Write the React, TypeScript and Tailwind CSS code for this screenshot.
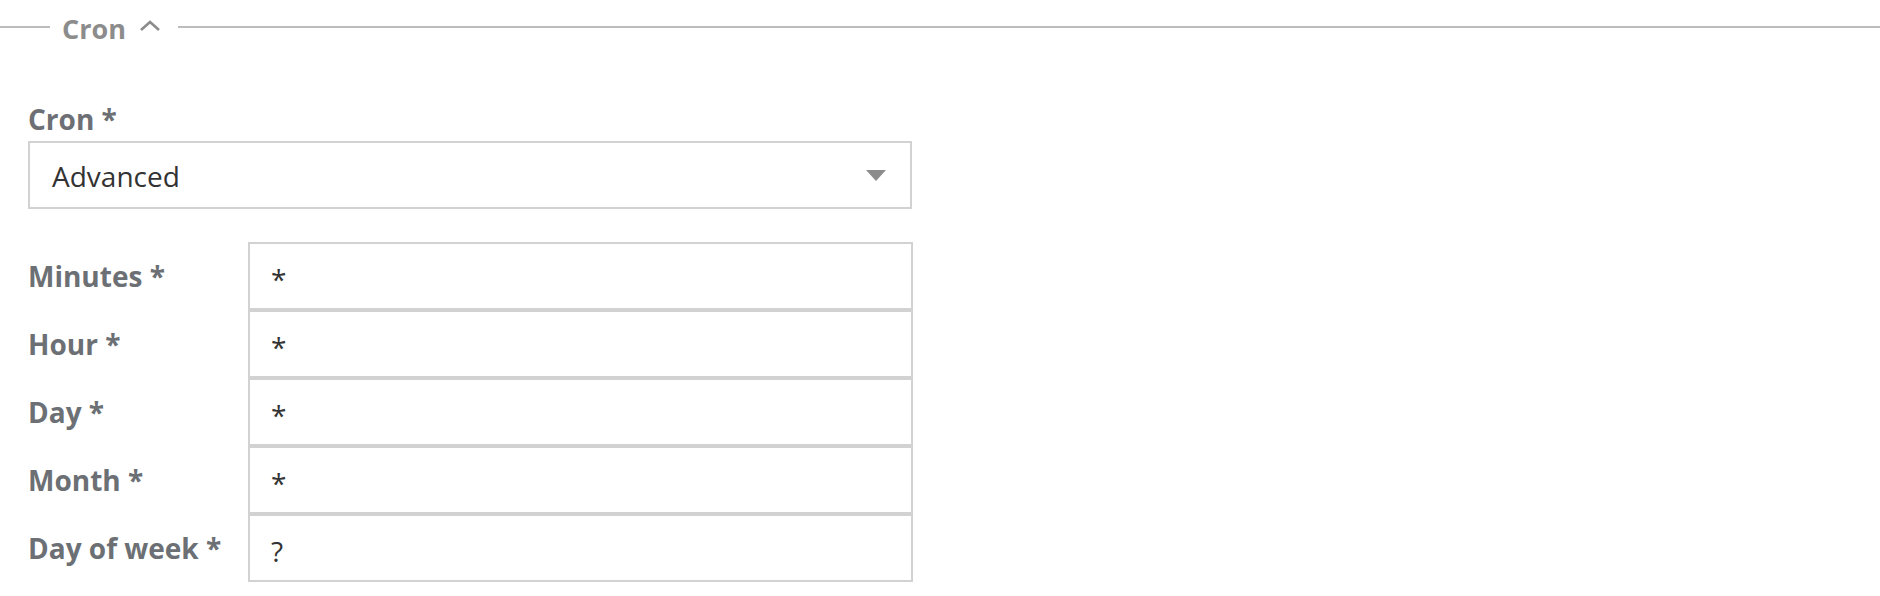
const fields = [
  { label: 'Minutes *', value: '*' },
  { label: 'Hour *', value: '*' },
  { label: 'Day *', value: '*' },
  { label: 'Month *', value: '*' },
  { label: 'Day of week *', value: '?' },
];

function Legend() {
  return (
    <div className="flex h-[54px] items-center">
      <div className="w-[50px] border-t-2 border-[#bcbcbc]" />
      <span className="mt-[3px] pl-[12px] pr-[13px] text-[27px] font-bold text-[#8c8c8c] leading-[36px]">Cron</span>
      <svg width="22" height="12" viewBox="0 0 22 12" className="mr-[17px] mt-[-2px]">
        <path d="M2 10 L11 2 L20 10" fill="none" stroke="#8c8c8c" strokeWidth="2.6" />
      </svg>
      <div className="flex-1 border-t-2 border-[#bcbcbc]" />
    </div>
  );
}

export default function App() {
  return (
    <div className="w-full bg-white font-['Open_Sans',sans-serif]">
      <Legend />

      <div className="pl-[28px] pt-[47px]">
        <label className="block text-[28px] font-bold leading-[36px] text-[#6c7075] mb-[4px]">Cron *</label>
        <div className="flex h-[68px] w-[884px] items-center justify-between border-2 border-[#d2d2d2] pl-[22px] pr-[24px] pt-[2px]">
          <span className="text-[28px] text-[#333333]">Advanced</span>
          <svg width="20" height="11" viewBox="0 0 20 11" className="mt-[-1px]">
            <path d="M0 0 L20 0 L10 11 Z" fill="#8c8c8c" />
          </svg>
        </div>

        <div className="mt-[33px] flex flex-col">
          {fields.map(f => (
            <div key={f.label} className="flex items-center">
              <div className="w-[220px] text-[28px] font-bold text-[#6c7075] leading-[36px]">{f.label}</div>
              <div className="flex h-[68px] w-[665px] items-center border-2 border-[#d2d2d2] pl-[21px] pt-[5px]">
                <span className="text-[28px] text-[#333333]">{f.value}</span>
              </div>
            </div>
          ))}
        </div>
      </div>
    </div>
  );
}
